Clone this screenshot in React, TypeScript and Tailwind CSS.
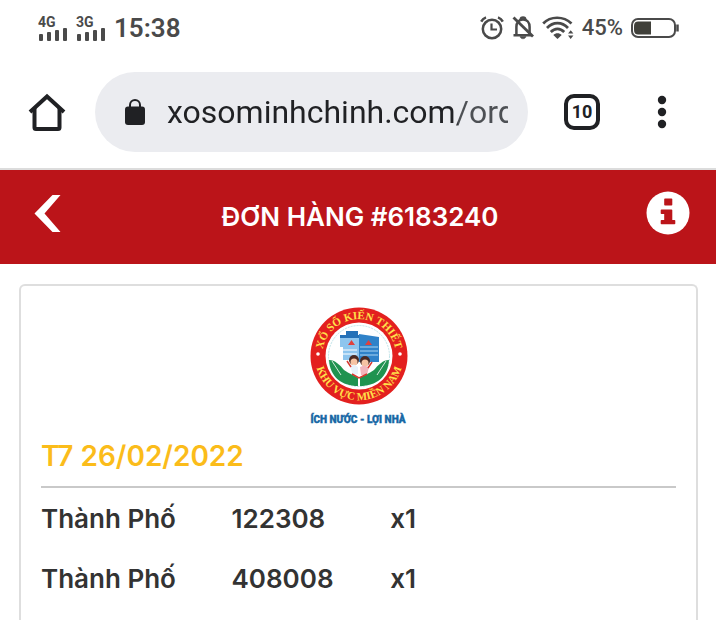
import React from 'react';

interface Ticket {
  province: string;
  number: string;
  quantity: number;
}

const tickets: Ticket[] = [
  { province: 'Thành Phố', number: '122308', quantity: 1 },
  { province: 'Thành Phố', number: '408008', quantity: 1 },
];

const SignalBars: React.FC<{ label: string }> = ({ label }) => (
  <div className="flex flex-col">
    <span className="text-sm leading-3 font-bold">{label}</span>
    <svg width="30" height="13" viewBox="0 0 30 13" fill="currentColor" aria-hidden="true">
      <rect x="1" y="6" width="4" height="7" rx="1" />
      <rect x="9" y="4" width="4" height="9" rx="1" />
      <rect x="17" y="2" width="4" height="11" rx="1" />
      <rect x="25" y="0" width="4" height="13" rx="1" />
    </svg>
  </div>
);

const StatusBar: React.FC = () => (
  <div className="flex h-14 items-center justify-between pr-[37px] pl-9 text-[#4a4a4a]">
    <div className="flex items-center gap-2 pl-0.5">
      <SignalBars label="4G" />
      <SignalBars label="3G" />
      <span className="text-[26px] leading-8 font-semibold">15:38</span>
    </div>
    <div className="flex items-center gap-2">
      <svg width="24" height="24" viewBox="0 0 24 24" fill="none" stroke="currentColor" aria-hidden="true">
        <circle cx="12" cy="13" r="9.2" strokeWidth="2.5" />
        <path d="M11.5 7.5v6h5.5" strokeWidth="2.2" />
        <path d="M1.2 5.6C2.2 3.6 3.8 2.2 6 1.4M22.8 5.6C21.8 3.6 20.2 2.2 18 1.4" strokeWidth="2.5" />
      </svg>
      <svg width="22" height="24" viewBox="1 0 22 24" fill="none" stroke="currentColor" strokeWidth="2.5" aria-hidden="true">
        <path d="M5.4 18.5V11c0-4.5 2.6-7.5 6.6-7.5s6.6 3 6.6 7.5v7.5M2.5 19.2h18" />
        <path d="M9.8 3.2c0-2.4 4.4-2.4 4.4 0" />
        <path d="M9 20.5h6c-.6 3-5.4 3-6 0z" fill="currentColor" strokeWidth="0.5" />
        <path d="M2.5 1.5L22 20.5" strokeWidth="2.8" />
      </svg>
      <svg width="32" height="24" viewBox="0 0 32 24" fill="none" stroke="currentColor" strokeWidth="2.7" aria-hidden="true">
        <path d="M1.2 7.5C8.5-.2 21.5-.2 29.5 7.5M5 12C11 5.4 20 5.4 26 12M8.8 16c4-4.2 9.4-4.2 13.4 0" />
        <path d="M11.3 19c2.4-2.2 6-2.2 8.4 0l-4.2 4z" fill="currentColor" stroke="none" />
        <path d="M26 17.6l2.7-3.4 2.7 3.4zM26 19.5l2.7 3.4 2.7-3.4z" fill="currentColor" stroke="none" />
      </svg>
      <span className="text-[22px] leading-8 font-medium">45%</span>
      <svg width="48" height="20" viewBox="0 0 48 20" fill="none" stroke="currentColor" aria-hidden="true">
        <rect x="1" y="1" width="43" height="18" rx="6" strokeWidth="2" />
        <path d="M7 3.5h13v13H7c-4 0-4-3-4-6.5s0-6.5 4-6.5z" fill="#40403a" stroke="none" />
        <path d="M46.5 6.5v7" strokeWidth="2.5" />
      </svg>
    </div>
  </div>
);

const BrowserBar: React.FC = () => (
  <div className="flex items-center border-b-2 border-[#dcdcdc] py-4 pr-9 pl-7 text-[#202124]">
    <button type="button" aria-label="Home" className="shrink-0">
      <svg width="38" height="38" viewBox="0 0 38 38" fill="none" stroke="currentColor" strokeWidth="4">
        <path d="M6.5 15v19.5a1.5 1.5 0 0 0 1.5 1.5h22a1.5 1.5 0 0 0 1.5-1.5V15" strokeLinejoin="round" />
        <path d="M2 19L19 3.5 36 19" />
      </svg>
    </button>
    <div className="ml-[29px] flex h-20 min-w-0 flex-1 items-center gap-5 rounded-full bg-[#ebecf0] pr-5 pl-7">
      <svg width="24" height="28" viewBox="0 0 24 28" className="shrink-0" aria-hidden="true">
        <path d="M7 10V7a5 5 0 0 1 10 0v3" fill="none" stroke="currentColor" strokeWidth="2" />
        <rect x="2" y="8.5" width="20" height="18.5" rx="3" fill="currentColor" />
      </svg>
      <input
        type="text"
        aria-label="Address"
        defaultValue="xosominhchinh.com/order"
        className="h-12 min-w-0 flex-1 bg-[linear-gradient(90deg,#202124_290px,#4d5054_291px)] bg-clip-text text-[32px] text-transparent outline-none"
      />
    </div>
    <button
      type="button"
      className="ml-9 flex size-9 shrink-0 items-center justify-center rounded-[10px] border-4 border-[#202124] text-lg leading-6 font-bold"
    >
      10
    </button>
    <button type="button" aria-label="Menu" className="ml-11 shrink-0">
      <svg width="36" height="36" viewBox="0 0 36 36" fill="currentColor">
        <circle cx="18" cy="6" r="4.2" />
        <circle cx="18" cy="18" r="4.2" />
        <circle cx="18" cy="30" r="4.2" />
      </svg>
    </button>
  </div>
);

const LotteryLogo: React.FC = () => (
  <svg width="120" height="128" viewBox="-1 -1 120 128" role="img" aria-label="Xổ số kiến thiết">
    <defs>
      <path id="arc-top" d="M22.2 61A37 37 0 1 1 95.8 61" />
      <path id="arc-bottom" d="M15.3 52A44 44 0 1 0 102.7 52" />
    </defs>
    <circle cx="59" cy="57" r="48.5" fill="#e3201f" />
    <circle cx="59" cy="57" r="33.5" fill="#fff" />
    <circle cx="59" cy="57" r="30.5" fill="none" stroke="#bfe3e8" strokeWidth="1" strokeDasharray="2 1" />
    <g fill="#ffe14a" fontFamily="'Liberation Serif', serif" fontSize="11" fontWeight="700" textAnchor="middle">
      <text>
        <textPath href="#arc-top" startOffset="50%">XỔ SỐ KIẾN THIẾT</textPath>
      </text>
      <text>
        <textPath href="#arc-bottom" startOffset="50%">KHU VỰC MIỀN NAM</textPath>
      </text>
    </g>
    <circle cx="18" cy="55" r="1.8" fill="#fff" />
    <circle cx="100" cy="55" r="1.8" fill="#fff" />
    {/* building */}
    <path d="M40 37h19v24H43V48h-3z" fill="#8ec5ee" />
    <path d="M40 36h19v3H40zM46 32h12v4H46z" fill="#2471b8" />
    <path d="M59 35l20 3v25H59z" fill="#2f82c9" />
    <path d="M60 48h18M60 52h18M60 56h18" stroke="#a9d3f3" strokeWidth="1.2" />
    <path d="M43 51h14M43 55h14" stroke="#fff" strokeWidth="1.2" />
    <path d="M48 46l3.5-5 3.5 5zM65 46l3.5-5 3.5 5z" fill="#e0413d" />
    {/* hands */}
    <path d="M29 61c6 0 11 5 15 10 5 4 11 5 14 8v8c-16 0-28-9-29-26z" fill="#1f9350" />
    <path d="M89 61c-6 0-11 5-15 10-5 4-11 5-14 8v8c16 0 28-9 29-26z" fill="#1f9350" />
    <path d="M32 62l9 14M86 62l-9 14" stroke="#fff" strokeWidth="0.8" />
    {/* children */}
    <circle cx="54" cy="61" r="5" fill="#4a2a24" />
    <circle cx="65" cy="62" r="5" fill="#4a2a24" />
    <circle cx="54" cy="63" r="3.5" fill="#f6c3a3" />
    <circle cx="65" cy="64" r="3.5" fill="#f6c3a3" />
    <path d="M50 67l4-1.5 4 2.5v7l-5 1z" fill="#e8f2fb" />
    <path d="M60 68l4-1.5 5 1.5-2 8h-6z" fill="#f2b6bd" />
    <path d="M47 62l4 6M72 63l-4 6M52 75l7 4 8-4" fill="none" stroke="#d9392f" strokeWidth="1.5" />
    <text
      x="58"
      y="124"
      fill="#1767a5"
      stroke="#1767a5"
      strokeWidth="0.4"
      fontFamily="Roboto, sans-serif"
      fontSize="10"
      fontWeight="900"
      textAnchor="middle"
    >
      ÍCH NƯỚC - LỢI NHÀ
    </text>
  </svg>
);

const App: React.FC = () => {
  return (
    <div className="flex min-h-screen flex-col bg-white font-[Roboto,sans-serif]">
      <StatusBar />
      <BrowserBar />

      <header className="flex h-[94px] items-center justify-between bg-[#bb1419] pr-6 pl-8 font-[Inter,sans-serif] text-white">
        <button type="button" aria-label="Back" className="mb-2 w-11">
          <svg width="30" height="40" viewBox="0 0 30 40" fill="currentColor">
            <path d="M20.5 2h8L12.5 20.5l16 18.5h-8L2.5 20.5z" />
          </svg>
        </button>
        <h1 className="text-[26px] leading-9 font-semibold">ĐƠN HÀNG #6183240</h1>
        <button type="button" aria-label="Info" className="mb-2">
          <svg width="48" height="44" viewBox="0 0 48 44">
            <circle cx="24" cy="22" r="21.5" fill="#fff" />
            <path
              d="M21 7.5h6.500a.8.8 0 0 1 .8.8v5.400a.8.8 0 0 1-.8.8H21a.8.8 0 0 1-.8-.8V8.300a.8.8 0 0 1 .8-.8zM17.500 18.500h10a.8.8 0 0 1 .8.8v9.700h2.200a.8.8 0 0 1 .8.8v2.700a.8.8 0 0 1-.8.8h-13a.8.8 0 0 1-.8-.8v-2.700a.8.8 0 0 1 .8-.8h2.700v-6h-2.700a.8.8 0 0 1-.8-.8v-2.900a.8.8 0 0 1 .8-.8z"
              fill="#bb1419"
            />
          </svg>
        </button>
      </header>

      <main className="flex flex-1 flex-col pt-5 pr-[18px] pl-[19px] font-[Inter,sans-serif] text-[#333]">
        <section className="flex-1 rounded-t-md border-2 border-b-0 border-[#dedede] px-5 pt-3">
          <div className="flex justify-center">
            <LotteryLogo />
          </div>
          <h2 className="border-b-2 border-[#c9c9c9] pt-3 pb-3 text-[28px] leading-9 font-semibold text-[#fbbc1a]">
            T7 26/02/2022
          </h2>
          <table className="w-full table-fixed text-left text-[26px] font-semibold">
            <tbody>
              {tickets.map((ticket) => (
                <tr key={ticket.number} className="h-15">
                  <td className="w-[30%]">{ticket.province}</td>
                  <td className="w-1/4">{ticket.number}</td>
                  <td>x{ticket.quantity}</td>
                </tr>
              ))}
            </tbody>
          </table>
        </section>
      </main>
    </div>
  );
};

export default App;
